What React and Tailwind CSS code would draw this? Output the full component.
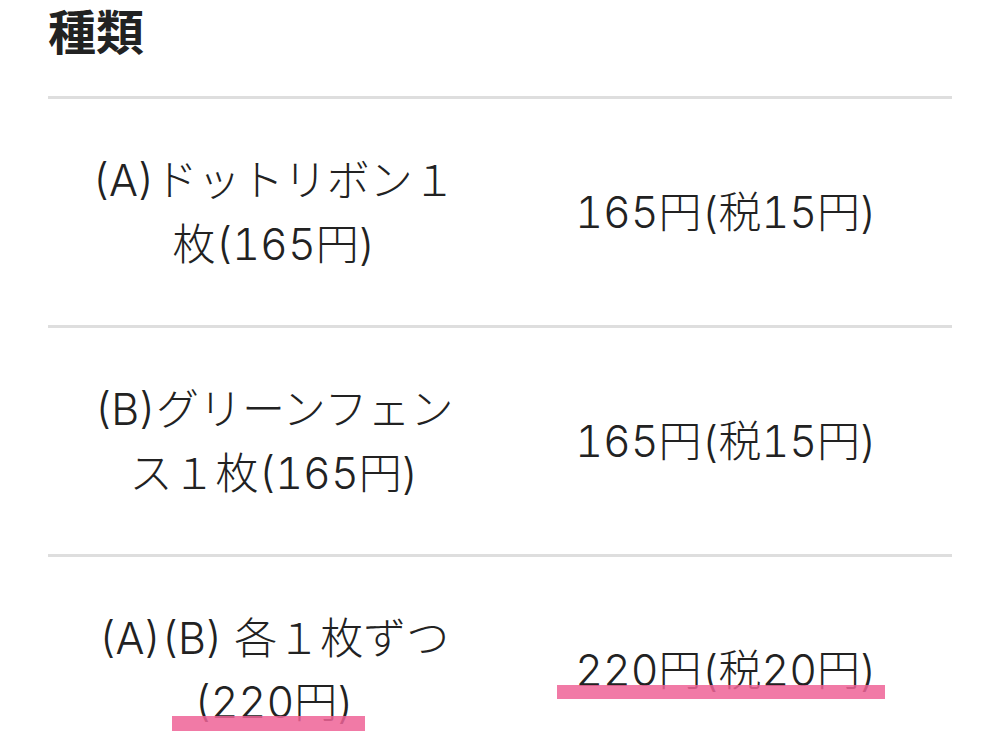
const rows = [
  { name: ["(A)ドットリボン１", "枚(165円)"], price: "165円(税15円)" },
  { name: ["(B)グリーンフェン", "ス１枚(165円)"], price: "165円(税15円)" },
  { name: ["(A)(B) 各１枚ずつ", "(220円)"], price: "220円(税20円)", mark: true },
];

function Marker({ children, bar }) {
  return (
    <span className="relative inline-block">
      {children}
      <span className={`absolute h-[14px] bg-[#ee6396]/85 ${bar}`} />
    </span>
  );
}

export default function App() {
  return (
    <div className="min-h-screen bg-white px-12 text-[#222] font-['Inter','Noto_Sans_CJK_JP',sans-serif]">
      <h2 className="text-[48px] font-bold leading-[58px] pb-[38px] font-['Noto_Sans_CJK_JP',sans-serif]">種類</h2>
      <div className="border-t-[3px] border-[#dedede]">
        {rows.map((r, i) => (
          <div key={i} className="grid grid-cols-2 border-b-[3px] border-[#dedede] h-[229px] items-center text-[43px] leading-[64px] text-center font-light tabular-nums">
            <div>
              {r.name[0]}
              <br />
              {r.mark ? (
                <Marker bar="left-[-22px] right-[-11px] bottom-[3px] h-[15px]">{r.name[1]}</Marker>
              ) : (
                r.name[1]
              )}
            </div>
            <div>
              {r.mark ? (
                <Marker bar="left-[-18px] right-[-8px] bottom-[3px]">{r.price}</Marker>
              ) : (
                r.price
              )}
            </div>
          </div>
        ))}
      </div>
    </div>
  );
}
